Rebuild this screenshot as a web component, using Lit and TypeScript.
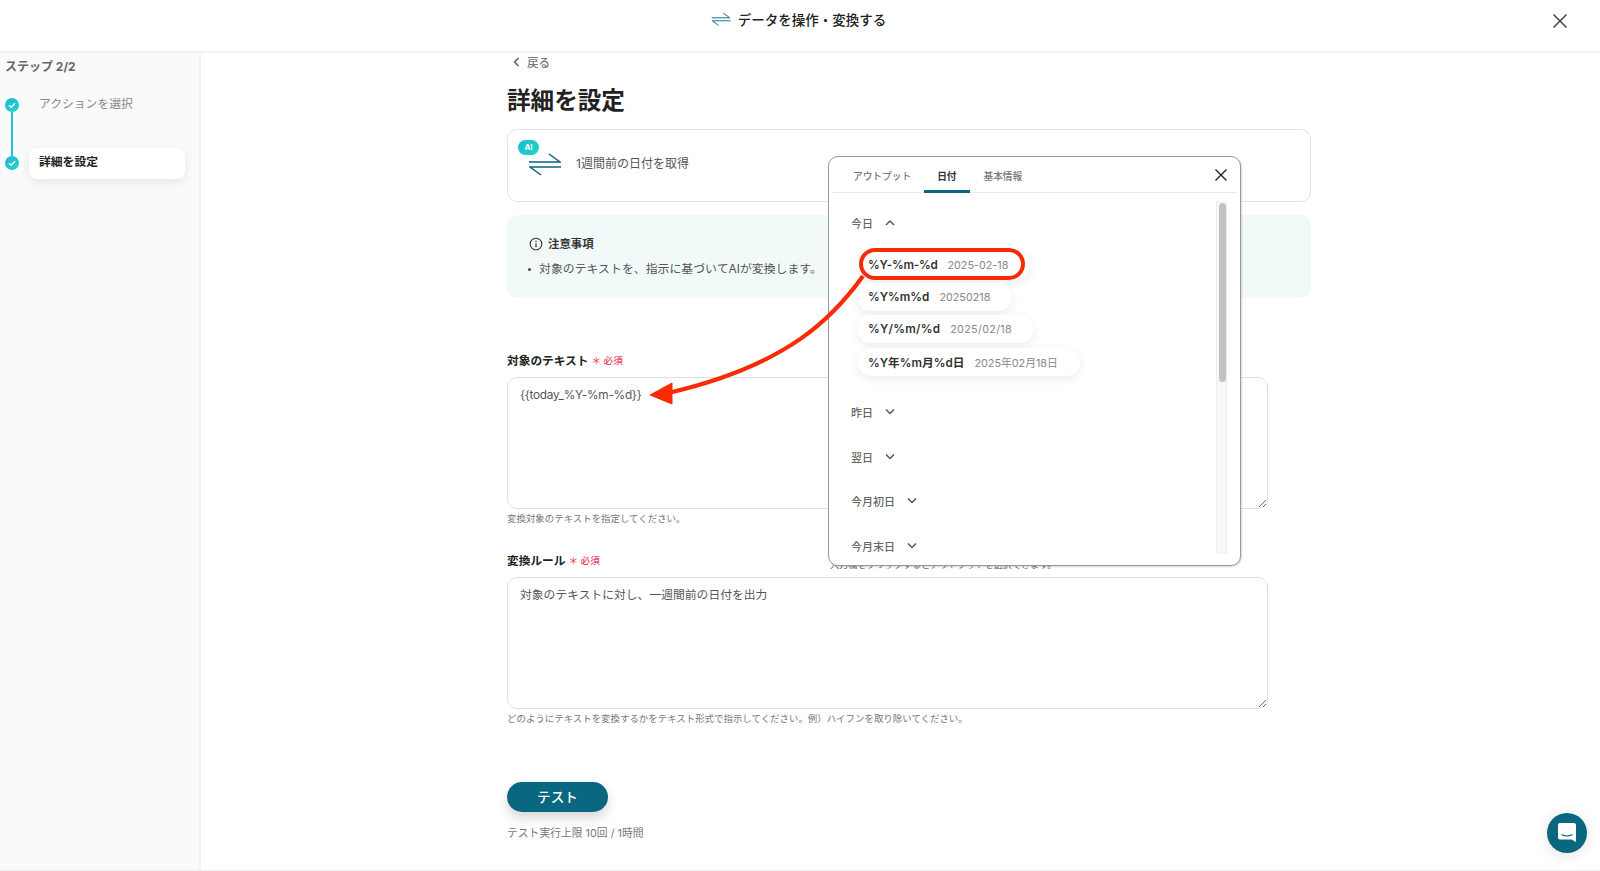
import { LitElement, html, css, svg } from "lit";
import { customElement } from "lit/decorators.js";

const chevDown = svg`<path d="M2 3.5 L6 7.5 L10 3.5" fill="none" stroke="#555" stroke-width="1.5"/>`;
const chevUp = svg`<path d="M2 8 L6 4 L10 8" fill="none" stroke="#555" stroke-width="1.5"/>`;
const check = svg`<path d="M4 7.2 L6.2 9.2 L10 5.2" fill="none" stroke="#fff" stroke-width="1.4"/>`;

@customElement("app-root")
export class AppRoot extends LitElement {
  static styles = css`
    :host { display: block; font-family: Inter, "Noto Sans CJK JP", sans-serif; color: #333; }
    * { box-sizing: border-box; }
    .root { position: relative; width: 1600px; height: 871px; overflow: hidden; background: #fff; display: flex; flex-direction: column; border-bottom: 1px solid #eee; }
    .header { height: 53px; flex: none; border-bottom: 2px solid #f2f2f2; display: flex; align-items: center; justify-content: center; padding-bottom: 13px; position: relative; }
    .htitle { display: flex; align-items: center; gap: 7px; font-size: 13.5px; font-weight: 500; color: #222; margin-left: -3px; }
    .hclose { position: absolute; left: 1552px; top: 13px; }
    .body { flex: 1; display: flex; min-height: 0; }
    .side { width: 201px; flex: none; background: #fafafa; border-right: 2px solid #f2f2f2; padding: 6px 14px 0 5px; }
    .stepno { font-size: 12px; font-weight: 700; color: #666; line-height: 16px; }
    .steps { position: relative; margin-top: 14px; display: flex; flex-direction: column; gap: 26px; }
    .line { position: absolute; left: 6.25px; top: 23px; width: 1.5px; height: 44px; background: #22c5d6; }
    .step { display: flex; align-items: center; gap: 10px; height: 32px; }
    .dot { width: 14px; height: 14px; border-radius: 50%; background: linear-gradient(135deg,#1fb8dc,#1fd5c4); flex: none; display: flex; }
    .slabel { font-size: 11.8px; color: #888; padding-left: 10px; width: 157px; height: 31px; line-height: 29px; }
    .slabel.on { font-weight: 700; color: #222; background: #fff; border-radius: 8px; box-shadow: 0 3px 10px rgba(0,0,0,.09); }
    .main { flex: 1; padding: 0 0 0 306px; }
    .back { display: flex; align-items: center; gap: 7px; font-size: 11.5px; color: #777; font-weight: 500; padding-left: 6px; height: 18px; }
    h1 { margin: 11px 0 0; font-size: 23.6px; line-height: 38px; font-weight: 700; color: #222; }
    .card { position: relative; margin-top: 9px; width: 804px; height: 72.500px; border: 1.5px solid #e3e3e3; border-radius: 10px; display: flex; align-items: flex-start; padding: 22px 0 0 21px; gap: 15px; font-size: 12px; color: #555; }
    .cardtext { line-height: 26px; margin-top: -1px; }
    .ai { position: absolute; left: 10px; top: 10px; width: 21px; height: 15px; border-radius: 8px; background: linear-gradient(120deg,#18bcd8,#20d4c0); color: #fff; font-size: 8px; font-weight: 700; text-align: center; line-height: 15px; }
    .notice { margin-top: 13.500px; width: 804px; height: 83px; border-radius: 10px; background: #f2faf9; padding: 20px 0 0 22px; }
    .ntitle { display: flex; align-items: center; gap: 5px; font-size: 11.4px; font-weight: 700; color: #333; line-height: 18px; }
    .nitem { display: flex; align-items: center; font-size: 11.9px; color: #555; margin-top: 7px; line-height: 18px; gap: 8px; }
    .bullet { width: 3px; height: 3px; background: #444; border-radius: 50%; margin-left: -1px; }
    .lrow { display: flex; align-items: center; gap: 3px; font-size: 11.7px; font-weight: 700; color: #222; line-height: 18px; }
    .lrow.first { margin-top: 54px; }
    .lrow.second { margin-top: 26px; position: relative; }
    .req { color: #f0445f; font-size: 9.6px; font-weight: 500; }
    .hiddenhelp { font-size: 9.1px; font-weight: 400; color: #666; position: absolute; left: 323px; top: 4px; white-space: nowrap; }
    textarea { display: block; margin-top: 7px; width: 761px; height: 132px; border: 1px solid #d8dfe6; border-radius: 10px; padding: 8px 12px; font: 11.8px/18px Inter, "Noto Sans CJK JP", sans-serif; color: #555; background: #fff; outline: none; }
    textarea.latin { letter-spacing: -.25px; }
    .hint { font-size: 9.45px; color: #777; line-height: 14px; margin-top: 3px; }
    .btn { margin-top: 56px; width: 101px; height: 30px; border-radius: 15px; border: none; background: #0a6781; color: #fff; font: 500 13.6px/30px Inter, "Noto Sans CJK JP", sans-serif; box-shadow: 0 6px 12px rgba(0,0,0,.16); display: block; padding: 0; }
    .limit { margin-top: 14px; font-size: 10.8px; color: #777; line-height: 16px; }

    .modal { position: absolute; left: 828px; top: 156px; width: 413px; height: 410px; background: #fff; border: 1.5px solid #999; border-radius: 10px; padding: 0 3px; display: flex; flex-direction: column; box-shadow: 1px 1px 2px rgba(0,0,0,.15); }
    .tabs { height: 36px; flex: none; border-bottom: 1px solid #e8e8e8; display: flex; align-items: stretch; padding-left: 8px; position: relative; font-size: 9.7px; font-weight: 500; color: #777; }
    .tab { padding: 8px 13px 0; line-height: 24px; height: 36px; }
    .tab.on { color: #333; font-weight: 700; border-bottom: 3px solid #0a6781; border-radius: 3px 3px 0 0; }
    .tab.last { margin-left: 1px; }
    .mclose { position: absolute; right: 9px; top: 11px; }
    .mbody { flex: 1; min-height: 0; display: flex; padding-bottom: 11px; }
    .list { flex: 1; padding: 8px 0 0 19px; }
    .ahead { display: flex; align-items: center; gap: 11px; font-size: 11px; font-weight: 500; color: #666; height: 44.5px; }
    .pills { display: flex; flex-direction: column; align-items: flex-start; gap: 4.2px; padding: 0 0 0 6px; margin: 5.500px 0 14.500px; }
    .pill { height: 28px; padding: 0 22px 0 11px; border-radius: 14px; background: #fff; box-shadow: 0 3px 10px rgba(0,0,0,.08); display: flex; align-items: center; gap: 10px; font-size: 11.7px; font-weight: 600; color: #333; white-space: nowrap; }
    .pill span { font-size: 10.8px; font-weight: 400; color: #888; }
    .track { width: 11px; flex: none; margin: 8px 10px 0 0; background: #f7f7f7; border-left: 1px solid #eee; border-right: 1px solid #eee; padding: 2px 1.5px 0; }
    .thumb { width: 7px; height: 179px; background: #c2c2c2; border-radius: 4px; }

    .marks { position: absolute; left: 0; top: 0; pointer-events: none; }
    .ring { position: absolute; left: 859px; top: 248px; width: 166px; height: 32px; border: 4px solid #f92a06; border-radius: 16px; box-shadow: 0 0 3px rgba(255,255,255,.8); }
    .chat { position: absolute; left: 1547px; top: 813px; width: 40px; height: 40px; border-radius: 50%; background: #0a6781; box-shadow: 0 2px 14px rgba(0,0,0,.12); display: flex; align-items: center; justify-content: center; }
  `;

  private swap(w: number, h: number, sw: number) {
    return html`<svg width=${w} height=${h} viewBox="0 0 32 24" style="flex:none">
      <path d="M0 10 H31 L20 2" fill="none" stroke="#0a6781" stroke-width=${sw} />
      <path d="M32 15 H1 L12 23" fill="none" stroke="#0a6781" stroke-width=${sw} />
    </svg>`;
  }

  render() {
    const pills = [
      { label: "%Y-%m-%d", date: "2025-02-18", ls: -0.25, dls: 0 },
      { label: "%Y%m%d", date: "20250218", ls: 0, dls: 0 },
      { label: "%Y/%m/%d", date: "2025/02/18", ls: 0.25, dls: 0.3 },
      { label: "%Y年%m月%d日", date: "2025年02月18日", ls: 0, dls: 0 },
    ];
    return html`
      <div class="root">
        <div class="header">
          <div class="htitle">${this.swap(20, 14, 1.6)}<span>データを操作・変換する</span></div>
          <svg class="hclose" width="16" height="16" viewBox="0 0 16 16"><path d="M1.5 1.5 L14.5 14.5 M14.5 1.5 L1.5 14.5" stroke="#444" stroke-width="1.5"/></svg>
        </div>
        <div class="body">
          <aside class="side">
            <div class="stepno">ステップ 2/2</div>
            <div class="steps">
              <div class="line"></div>
              <div class="step"><div class="dot"><svg width="14" height="14">${check}</svg></div><div class="slabel">アクションを選択</div></div>
              <div class="step"><div class="dot"><svg width="14" height="14">${check}</svg></div><div class="slabel on">詳細を設定</div></div>
            </div>
          </aside>
          <main class="main">
            <div class="back"><svg width="7" height="10" viewBox="0 0 7 10"><path d="M5.5 1 L1.5 5 L5.5 9" fill="none" stroke="#555" stroke-width="1.4"/></svg>戻る</div>
            <h1>詳細を設定</h1>
            <div class="card">
              <span class="ai">AI</span>
              ${this.swap(32, 24, 1.5)}
              <span class="cardtext">1週間前の日付を取得</span>
            </div>
            <div class="notice">
              <div class="ntitle">
                <svg width="14" height="14" viewBox="0 0 14 14"><circle cx="7" cy="7" r="5.8" fill="none" stroke="#333" stroke-width="1.1"/><path d="M7 6.2 V10.2" stroke="#333" stroke-width="1.2"/><circle cx="7" cy="4.2" r=".8" fill="#333"/></svg>
                注意事項
              </div>
              <div class="nitem"><i class="bullet"></i>対象のテキストを、指示に基づいてAIが変換します。</div>
            </div>
            <div class="lrow first">対象のテキスト <span class="req">＊ 必須</span></div>
            <textarea class="latin" .value=${"{{today_%Y-%m-%d}}"}></textarea>
            <div class="hint">変換対象のテキストを指定してください。</div>
            <div class="lrow second">変換ルール <span class="req">＊ 必須</span><span class="hiddenhelp">入力欄をクリックするとアウトプットを選択できます。</span></div>
            <textarea .value=${"対象のテキストに対し、一週間前の日付を出力"}></textarea>
            <div class="hint">どのようにテキストを変換するかをテキスト形式で指示してください。例）ハイフンを取り除いてください。</div>
            <button class="btn">テスト</button>
            <div class="limit">テスト実行上限 10回 / 1時間</div>
          </main>
        </div>

        <section class="modal">
          <div class="tabs">
            <div class="tab">アウトプット</div>
            <div class="tab on">日付</div>
            <div class="tab last">基本情報</div>
            <svg class="mclose" width="14" height="14" viewBox="0 0 14 14"><path d="M1.5 1.5 L12.5 12.5 M12.5 1.5 L1.5 12.5" stroke="#222" stroke-width="1.4"/></svg>
          </div>
          <div class="mbody">
            <div class="list">
              <div class="ahead">今日 <svg width="12" height="12">${chevUp}</svg></div>
              <div class="pills">
                ${pills.map((p) => html`<div class="pill" style="letter-spacing:${p.ls}px">${p.label}<span style="letter-spacing:${p.dls}px">${p.date}</span></div>`)}
              </div>
              <div class="ahead">昨日 <svg width="12" height="12">${chevDown}</svg></div>
              <div class="ahead">翌日 <svg width="12" height="12">${chevDown}</svg></div>
              <div class="ahead">今月初日 <svg width="12" height="12">${chevDown}</svg></div>
              <div class="ahead">今月末日 <svg width="12" height="12">${chevDown}</svg></div>
            </div>
            <div class="track"><div class="thumb"></div></div>
          </div>
        </section>

        <div class="ring"></div>
        <svg class="marks" width="1600" height="871">
          <path d="M863 276 C835 315 790 365 668 393" fill="none" stroke="#f92a06" stroke-width="4.2"/>
          <path d="M650 395 L672 383 L672 404 Z" fill="#f92a06" stroke="#f92a06" stroke-width="1"/>
        </svg>

        <div class="chat">
          <svg width="20" height="22" viewBox="0 0 20 22">
            <path d="M3 1 H17 Q19 1 19 3 V20 L14.500 17.500 H3 Q1 17.500 1 15.500 V3 Q1 1 3 1 Z" fill="#fff"/>
            <path d="M4.500 12.500 Q10 15.500 15.500 12.500" fill="none" stroke="#0a6781" stroke-width="1.2"/>
          </svg>
        </div>
      </div>
    `;
  }
}
